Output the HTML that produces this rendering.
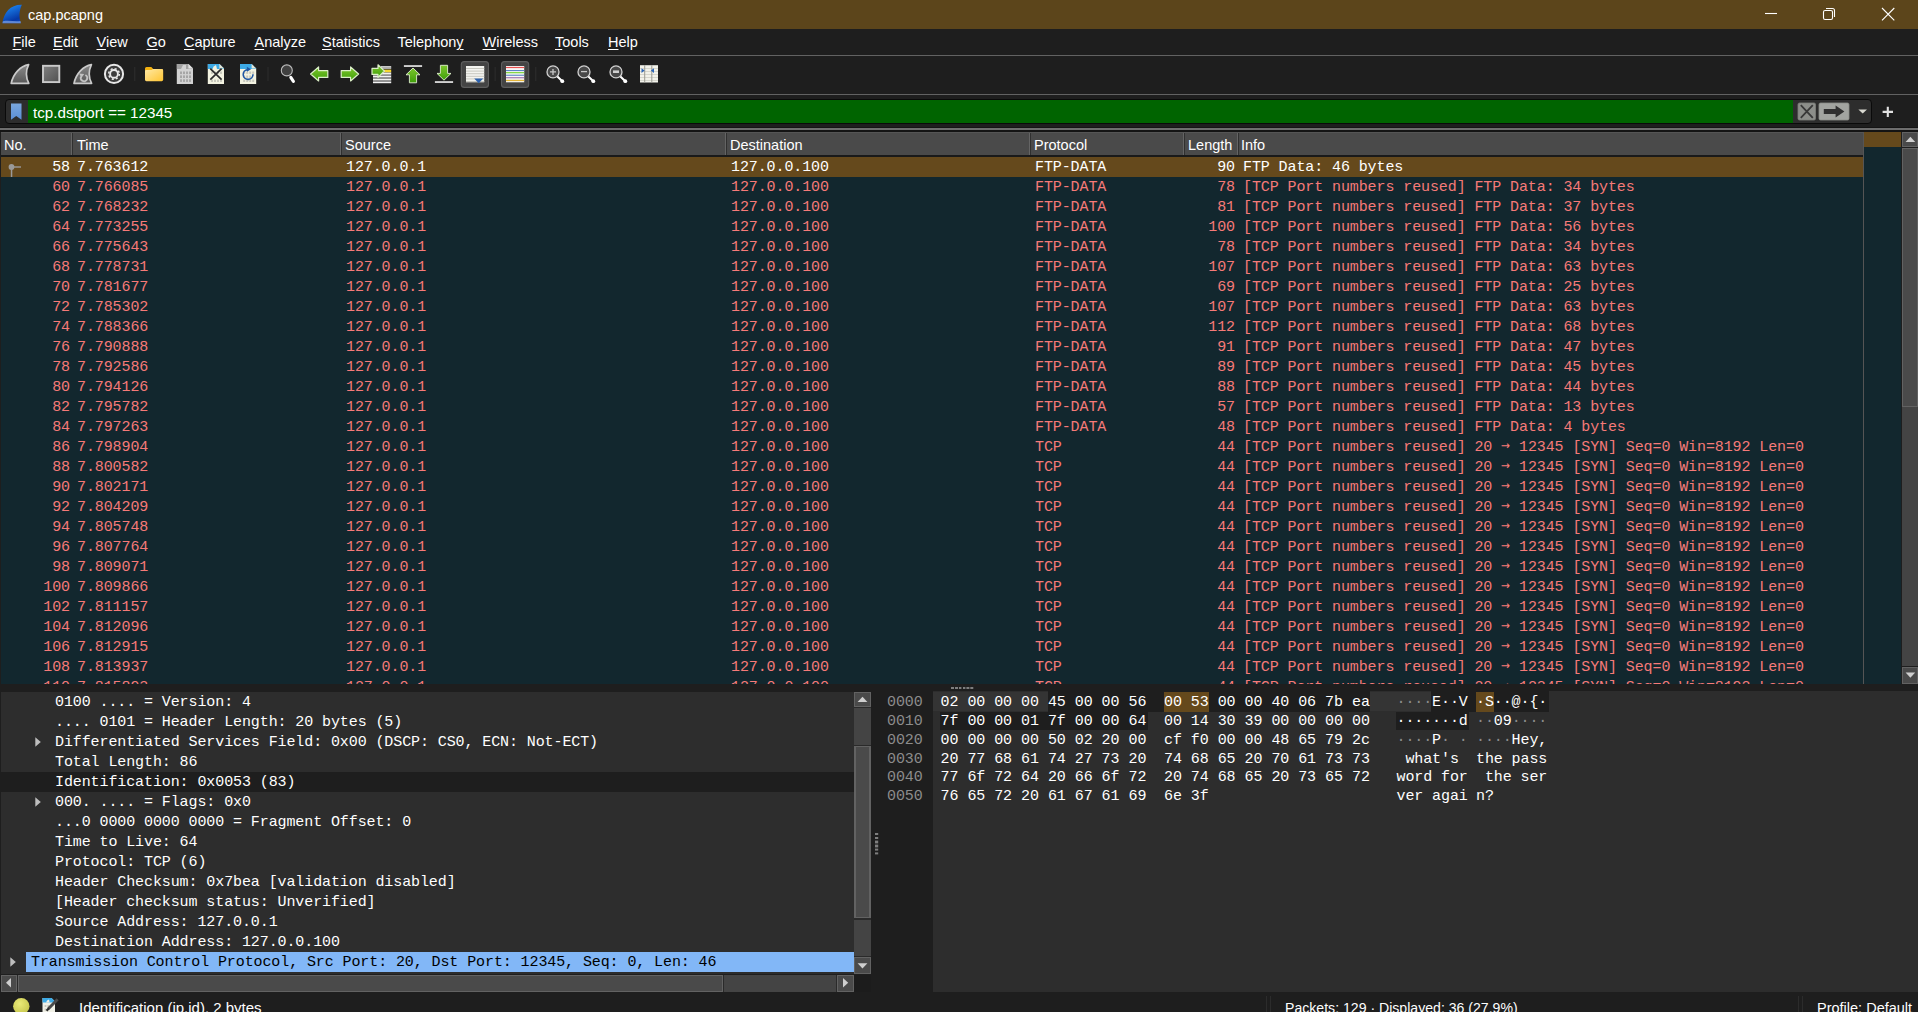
<!DOCTYPE html>
<html lang="en">
<head>
<meta charset="utf-8">
<title>cap.pcapng</title>
<style>
*{box-sizing:border-box;margin:0;padding:0}
html,body{width:1918px;height:1012px;overflow:hidden;background:#1e1e1e}
body{position:relative;font-family:"Liberation Sans",sans-serif;color:#fff}
.abs{position:absolute}
#title{position:absolute;left:0;top:0;width:1918px;height:29px;background:#5c451b}
#title .tt{position:absolute;left:28px;top:6px;font-size:14.5px;line-height:18px;color:#fff}
#menu{position:absolute;left:0;top:29px;width:1918px;height:26px;background:#1e1e1e}
.mi{position:absolute;top:4px;font-size:14.5px;line-height:18px;color:#fff;white-space:pre}
.mi u{text-decoration:underline;text-underline-offset:1.5px;text-decoration-thickness:1px}
.hl{position:absolute;left:0;width:1918px;height:1px}
#filter{position:absolute;left:5px;top:99px;width:1867px;height:25px;background:#2d2d2d;border:1px solid #0a0a0a;border-radius:4px}
#fgreen{position:absolute;left:28px;top:100px;width:1765px;height:23px;background:#006400}
#ftext{position:absolute;left:33px;top:103px;font-size:15.2px;line-height:20px;color:#fff;white-space:pre}
/* packet list */
#plist{position:absolute;left:1px;top:132px;width:1862px;height:552px;background:#12272e;overflow:hidden}
#phead{position:absolute;left:0;top:0;width:1862px;height:23px;background:#4a4a4a;border-top:1px solid #555}
.hc{position:absolute;top:3px;font-size:14.5px;line-height:18px;color:#fff}
.hs{position:absolute;top:0px;width:1px;height:22px;background:#646464}
.hs2{position:absolute;top:0px;width:1px;height:24px;background:#303030}
.r{position:absolute;left:1px;width:1862px;height:20px;color:#f67a78;font-family:"Liberation Mono",monospace;font-size:15px;letter-spacing:-0.1px;line-height:20px;white-space:pre}
.r.sel{background:#65491c;color:#fff}
.c{position:absolute;top:1px}
.ar{font-family:"DejaVu Sans Mono","Liberation Mono",monospace;font-size:14.8px;letter-spacing:0;line-height:0;position:relative;top:-1px}
.no{right:1793px}
.tm{left:76px}
.sr{left:345px}
.ds{left:730px}
.pr{left:1034px}
.ln{right:628px}
.inf{left:1242px}
/* tree */
#tree{position:absolute;left:1px;top:692px;width:853px;height:283px;background:#2d2d2d}
.tsel{position:absolute;left:1px;width:853px;height:20px;background:#1e1e1e}
.tblue{position:absolute;left:26px;width:828px;height:20px;background:#82b7f7}
.tl{position:absolute;font-family:"Liberation Mono",monospace;font-size:15px;letter-spacing:-0.1px;line-height:20px;white-space:pre;color:#fff;margin-top:1px}
.tl.blk{color:#000}
.exp{position:absolute}
/* hex */
#hexoff{position:absolute;left:880px;top:691px;width:53px;height:301px;background:#1e1e1e}
#hexbg{position:absolute;left:933px;top:691px;width:985px;height:301px;background:#2d2d2d}
.hx{position:absolute;font-family:"Liberation Mono",monospace;font-size:15px;letter-spacing:-0.1px;line-height:19px;white-space:pre;color:#fff;margin-top:1px}
.hx.off{color:#8c8c8c}
.dm{color:#8c8c8c}
.hbg{position:absolute}
/* scrollbars */
.sb{position:absolute;background:#444}
.sbb{position:absolute;background:#4a4a4a;border:1px solid #626262}
#status{position:absolute;left:0;top:992px;width:1918px;height:20px;background:#1e1e1e}
.st{position:absolute;top:999px;font-size:14.5px;line-height:18px;color:#fff;white-space:pre}
</style>
</head>
<body>
<div id="title"><span class="tt">cap.pcapng</span></div>
<div id="menu">
<span class="mi" style="left:12.5px"><u>F</u>ile</span>
<span class="mi" style="left:53.0px"><u>E</u>dit</span>
<span class="mi" style="left:96.5px"><u>V</u>iew</span>
<span class="mi" style="left:146.5px"><u>G</u>o</span>
<span class="mi" style="left:184.0px"><u>C</u>apture</span>
<span class="mi" style="left:254.5px"><u>A</u>nalyze</span>
<span class="mi" style="left:322.0px"><u>S</u>tatistics</span>
<span class="mi" style="left:397.5px">Telephon<u>y</u></span>
<span class="mi" style="left:482.5px"><u>W</u>ireless</span>
<span class="mi" style="left:555.0px"><u>T</u>ools</span>
<span class="mi" style="left:608.0px"><u>H</u>elp</span>
</div>
<div class="hl" style="top:55px;background:#626262"></div>
<div class="hl" style="top:94px;background:#626262"></div>
<div id="filter"></div>
<div id="fgreen"></div>
<div id="ftext">tcp.dstport == 12345</div>

<svg class="abs" style="left:0;top:0" width="1918" height="130" viewBox="0 0 1918 130">
<defs>
<linearGradient id="gfin" x1="0" y1="0" x2="0" y2="1"><stop offset="0" stop-color="#8a8a8a"/><stop offset="1" stop-color="#585858"/></linearGradient>
<linearGradient id="gsq" x1="0" y1="0" x2="1" y2="1"><stop offset="0" stop-color="#808080"/><stop offset="1" stop-color="#505050"/></linearGradient>
<linearGradient id="gfold" x1="0" y1="0" x2="1" y2="1"><stop offset="0" stop-color="#ffe9a6"/><stop offset="1" stop-color="#ffc532"/></linearGradient>
<linearGradient id="ggrn" x1="0" y1="0" x2="0" y2="1"><stop offset="0" stop-color="#7cc62c"/><stop offset="1" stop-color="#3f9e0a"/></linearGradient>
<linearGradient id="gblue" x1="0.3" y1="0" x2="0.75" y2="1"><stop offset="0" stop-color="#1f8cf6"/><stop offset="0.8" stop-color="#0638a6"/><stop offset="1" stop-color="#0a44b8"/></linearGradient>
<linearGradient id="gbm" x1="0" y1="0" x2="0" y2="1"><stop offset="0" stop-color="#7aa7de"/><stop offset="1" stop-color="#5b8fd6"/></linearGradient>
</defs>
<!-- title icon -->
<path d="M21.9 4.7 C10.5 4.4 3.8 12.5 2.4 23.2 L20.9 23.2 C18.9 17.5 19 10.5 21.9 4.7 Z" fill="url(#gblue)"/>
<path d="M2.9 21.2 C9 20 15 21.8 20.5 20.9 L20.9 23.2 L2.4 23.2 Z" fill="#a8c4f4" opacity="0.55"/>
<!-- window controls -->
<path d="M1765 13.5 H1777" stroke="#fff" stroke-width="1.1" fill="none"/>
<rect x="1823.5" y="10.5" width="9" height="9" rx="1.6" fill="none" stroke="#fff" stroke-width="1.1"/>
<path d="M1826 8.5 H1832.5 Q1834.5 8.5 1834.5 10.5 V17" fill="none" stroke="#fff" stroke-width="1.1"/>
<path d="M1882 8 L1894.3 20.3 M1894.3 8 L1882 20.3" stroke="#fff" stroke-width="1.1" fill="none"/>
<!-- toolbar -->
<path d="M28.6 64.6 C20.5 66 13.2 73.5 11.2 83.3 L28.8 83.3 C25.8 77.5 25.8 70.5 28.6 64.6 Z" fill="url(#gfin)" stroke="#cacaca" stroke-width="1.7" stroke-linejoin="round"/>
<rect x="43" y="65.8" width="16.3" height="16.3" fill="url(#gsq)" stroke="#cacaca" stroke-width="1.9"/>
<path transform="translate(62.8 0)" d="M28.6 64.6 C20.5 66 13.2 73.5 11.2 83.3 L28.8 83.3 C25.8 77.5 25.8 70.5 28.6 64.6 Z" fill="url(#gfin)" stroke="#cacaca" stroke-width="1.7" stroke-linejoin="round"/>
<path d="M85.4 75 A3.3 3.3 0 1 1 81 76.6" fill="none" stroke="#c2c2c2" stroke-width="1.9"/>
<path d="M79.2 73.6 L84.2 74 L81.4 78 Z" fill="#c2c2c2"/>
<circle cx="114" cy="73.9" r="9.1" fill="#3c3c3c" stroke="#e8e8e8" stroke-width="2"/>
<circle cx="114" cy="73.9" r="3.9" fill="none" stroke="#e8e8e8" stroke-width="1.9"/>
<circle cx="114" cy="73.9" r="5.3" fill="none" stroke="#e8e8e8" stroke-width="1.5" stroke-dasharray="2.08 2.08"/>
<g fill="#292929"><rect x="134" y="67" width="1.4" height="14"/><rect x="267.3" y="67" width="1.4" height="14"/><rect x="494.5" y="67" width="1.4" height="14"/><rect x="535" y="67" width="1.4" height="14"/></g>
<!-- folder -->
<path d="M145 80 V68.4 Q145 66.9 146.5 66.9 H151.3 L153.2 68.9 H161.6 Q163.1 68.9 163.1 70.4 V80 Z" fill="#f2b010"/>
<path d="M145 71 Q145 69.9 146.2 69.9 H151.6 L153 68.9 H161.8 Q163.1 68.9 163.1 70.2 V79.8 Q163.1 81.2 161.7 81.2 H146.4 Q145 81.2 145 79.8 Z" fill="url(#gfold)"/>
<!-- gray doc -->
<path d="M176.8 64 H188.4 L193 68.6 V84 H176.8 Z" fill="#d2d2d2"/>
<path d="M176.8 64 H188.4 L193 68.6 V69 H176.8 Z" fill="#a2a2a2"/>
<path d="M181 69 L183 65 H186 L186 69Z" fill="#d2d2d2"/>
<path d="M188.4 64 L193 68.6 H188.4 Z" fill="#e2e2e2"/>
<g fill="#a6a6a6"><rect x="180" y="71.5" width="2" height="2.6"/><rect x="183" y="71.5" width="2" height="2.6"/><rect x="186" y="71.5" width="2" height="2.6"/><rect x="189" y="71.5" width="2" height="2.6"/>
<rect x="180" y="75.4" width="2" height="2.6"/><rect x="183" y="75.4" width="2" height="2.6"/><rect x="186" y="75.4" width="2" height="2.6"/><rect x="189" y="75.4" width="2" height="2.6"/>
<rect x="180" y="79.3" width="2" height="2.6"/><rect x="183" y="79.3" width="2" height="2.6"/><rect x="186" y="79.3" width="2" height="2.6"/><rect x="189" y="79.3" width="2" height="2.6"/></g>
<!-- X doc -->
<path d="M207.8 64 H219.4 L224 68.6 V84 H207.8 Z" fill="#f3f3e1"/>
<path d="M207.8 64 H219.4 L224 68.6 V69 H207.8 Z" fill="#3daae6"/>
<path d="M212.5 69 Q213 66 216 65 L217 69Z" fill="#f3f3e1"/>
<path d="M219.4 64 L224 68.6 H219.4 Z" fill="#e6e6d6"/>
<g fill="#c9c9bd"><rect x="211" y="71.5" width="2" height="2.4"/><rect x="214" y="71.5" width="2" height="2.4"/><rect x="217" y="71.5" width="2" height="2.4"/><rect x="220" y="71.5" width="2" height="2.4"/>
<rect x="211" y="79.6" width="2" height="2.4"/><rect x="214" y="79.6" width="2" height="2.4"/><rect x="217" y="79.6" width="2" height="2.4"/><rect x="220" y="79.6" width="2" height="2.4"/></g>
<path d="M210.3 68.6 L221.6 79.6 M221.6 68.6 L210.3 79.6" stroke="#2b2b2b" stroke-width="1.7" fill="none"/>
<!-- reload doc -->
<path d="M240 64 H251.6 L256.2 68.6 V84 H240 Z" fill="#f3f3e1"/>
<path d="M240 64 H251.6 L256.2 68.6 V69 H240 Z" fill="#3daae6"/>
<path d="M251.6 64 L256.2 68.6 H251.6 Z" fill="#e6e6d6"/>
<g fill="#c9c9bd"><rect x="243.2" y="71.5" width="2" height="2.4"/><rect x="246.2" y="71.5" width="2" height="2.4"/><rect x="249.2" y="71.5" width="2" height="2.4"/><rect x="252.2" y="71.5" width="2" height="2.4"/>
<rect x="243.2" y="75.5" width="2" height="2.4"/><rect x="246.2" y="75.5" width="2" height="2.4"/><rect x="249.2" y="75.5" width="2" height="2.4"/>
<rect x="243.2" y="79.6" width="2" height="2.4"/><rect x="246.2" y="79.6" width="2" height="2.4"/><rect x="249.2" y="79.6" width="2" height="2.4"/><rect x="252.2" y="79.6" width="2" height="2.4"/></g>
<path d="M253 74.3 A4.9 4.9 0 1 1 247.6 69.6" fill="none" stroke="#1f57a4" stroke-width="1.6"/>
<path d="M246.8 66.8 L251 69.2 L247 71.8 Z" fill="#1f57a4"/>
<!-- find -->
<circle cx="286.8" cy="70.4" r="5.5" fill="#404040" stroke="#bcbcbc" stroke-width="1.1"/>
<path d="M290.8 77.4 L293.4 81.4" stroke="#fff" stroke-width="3.1" stroke-linecap="round"/>
<!-- arrows -->
<path d="M310.6 74 L318.6 67 V70.6 H327.8 V77.4 H318.6 V81 Z" fill="url(#ggrn)" stroke="#dcefc8" stroke-width="1.2" stroke-linejoin="round"/>
<path d="M358.6 74 L350.6 67 V70.6 H341.2 V77.4 H350.6 V81 Z" fill="url(#ggrn)" stroke="#dcefc8" stroke-width="1.2" stroke-linejoin="round"/>
<!-- goto -->
<g fill="#f2f2f2"><rect x="381" y="66.2" width="10.2" height="1.5"/><rect x="373" y="72.4" width="18.2" height="1.6"/><rect x="373" y="75.6" width="18.2" height="1.6"/><rect x="373" y="78.6" width="18.2" height="1.6"/><rect x="373" y="81.6" width="18.2" height="1.6"/></g>
<g fill="#a8a8a8"><rect x="381" y="67.7" width="10.2" height="1.3"/><rect x="373" y="74" width="18.2" height="1.6"/><rect x="373" y="77.2" width="18.2" height="1.4"/><rect x="373" y="80.2" width="18.2" height="1.4"/></g>
<rect x="384" y="69.6" width="7.2" height="2.6" fill="#f5d631"/>
<path d="M384.4 71 L378 64.8 V68.4 H372 V74.4 H378 V77.4 Z" fill="url(#ggrn)" stroke="#dcefc8" stroke-width="1.2" stroke-linejoin="round"/>
<!-- first / last -->
<rect x="403.9" y="65.1" width="18.2" height="1.9" fill="#d0d0d0"/>
<path d="M413 68 L420 74.8 H416.6 V82.8 H409.4 V74.8 H406 Z" fill="url(#ggrn)" stroke="#e2f2d0" stroke-width="0.9" stroke-linejoin="round"/>
<rect x="434.9" y="81.1" width="18.2" height="1.9" fill="#d0d0d0"/>
<path d="M444 80.2 L451 73.4 H447.6 V65.3 H440.4 V73.4 H437 Z" fill="url(#ggrn)" stroke="#e2f2d0" stroke-width="0.9" stroke-linejoin="round"/>
<!-- toggle buttons -->
<rect x="461.3" y="61.6" width="27.2" height="25.8" rx="3" fill="#444" stroke="#5e5e5e" stroke-width="1.1"/>
<rect x="466" y="66" width="18.2" height="16.3" fill="#f4f4f0"/>
<g fill="#c8c8c0"><rect x="466" y="68" width="18.2" height="1"/><rect x="466" y="70.6" width="18.2" height="1"/><rect x="466" y="73.2" width="18.2" height="1"/><rect x="466" y="75.8" width="18.2" height="1"/><rect x="466" y="78.4" width="18.2" height="1"/><rect x="466" y="81" width="18.2" height="1"/></g>
<path d="M474.2 78.6 H483.2 L478.7 83.2 Z" fill="#2d62ae"/>
<rect x="501.5" y="61.6" width="27.2" height="25.8" rx="3" fill="#444" stroke="#5e5e5e" stroke-width="1.1"/>
<rect x="506" y="66" width="18.2" height="16.3" fill="#f8f8f8"/>
<rect x="506" y="66.9" width="18.2" height="1.2" fill="#ea5252"/><rect x="506" y="70" width="18.2" height="1.1" fill="#5b86c4"/><rect x="506" y="72" width="18.2" height="1.3" fill="#86d848"/><rect x="506" y="74.7" width="18.2" height="1.1" fill="#5b86c4"/><rect x="506" y="77.2" width="18.2" height="1.1" fill="#9a6aa8"/><rect x="506" y="79.8" width="18.2" height="1.3" fill="#e4b53a"/>
<!-- zoom icons -->
<g><path d="M557.4 76.4 L562.6 81.4" stroke="#fff" stroke-width="2.1" stroke-linecap="round"/><circle cx="562.3" cy="81.2" r="1.9" fill="#fff"/><circle cx="553" cy="71.9" r="6" fill="#484848" stroke="#d2d2d2" stroke-width="1.3"/></g>
<g transform="translate(31 0)"><path d="M557.4 76.4 L562.6 81.4" stroke="#fff" stroke-width="2.1" stroke-linecap="round"/><circle cx="562.3" cy="81.2" r="1.9" fill="#fff"/><circle cx="553" cy="71.9" r="6" fill="#484848" stroke="#d2d2d2" stroke-width="1.3"/></g><g transform="translate(63 0)"><path d="M557.4 76.4 L562.6 81.4" stroke="#fff" stroke-width="2.1" stroke-linecap="round"/><circle cx="562.3" cy="81.2" r="1.9" fill="#fff"/><circle cx="553" cy="71.9" r="6" fill="#484848" stroke="#d2d2d2" stroke-width="1.3"/></g>
<path d="M550 71.9 H556 M553 68.9 V74.9" stroke="#c8c8c8" stroke-width="1.3"/>
<path d="M581 71.6 H587" stroke="#c8c8c8" stroke-width="1.3"/>
<rect x="613" y="70.4" width="6" height="2.6" fill="#d0d0d0"/>
<!-- resize cols -->
<rect x="640" y="65.2" width="18" height="17.3" fill="#f2f2ea"/>
<g fill="#cfcfc6"><rect x="640" y="68" width="18" height="0.8"/><rect x="640" y="71" width="18" height="0.8"/><rect x="640" y="74" width="18" height="0.8"/><rect x="640" y="77" width="18" height="0.8"/><rect x="640" y="80" width="18" height="0.8"/></g>
<rect x="644.2" y="65.2" width="1" height="17.3" fill="#9a9a92"/><rect x="651.3" y="65.2" width="1" height="17.3" fill="#9a9a92"/>
<path d="M641.5 68.2 L644.6 70.6 L641.5 73 Z" fill="#2c66b8"/><path d="M654 68.2 L650.9 70.6 L654 73 Z" fill="#2c66b8"/>
<!-- filter bar -->
<path d="M11 103.4 H21.5 V119.8 L16.25 116 L11 119.8 Z" fill="url(#gbm)"/>
<rect x="1798" y="103" width="17.5" height="17" rx="1.5" fill="#8c8e8a" stroke="#7c7e7a" stroke-width="0.8"/>
<path d="M1800.8 105.2 L1812.8 117.8 M1812.8 105.2 L1800.8 117.8" stroke="#383838" stroke-width="1.8"/>
<rect x="1819" y="103" width="30" height="17" rx="1.5" fill="#a2a4a0" stroke="#8c8e88" stroke-width="0.8"/>
<path d="M1823.8 108.9 H1835.6 V105.6 L1844.4 111.5 L1835.6 117.4 V114.1 H1823.8 Z" fill="#303030"/>
<path d="M1858.4 109.4 H1867 L1862.7 113.4 Z" fill="#d8d8d0"/>
<path d="M1882.6 111.9 H1893 M1887.8 106.8 V117" stroke="#e2e2e2" stroke-width="2.1"/>
</svg>
<div class="hl" style="top:127px;background:#141414"></div>
<div class="hl" style="top:128px;height:2px;background:#6e6e6e"></div>
<div class="hl" style="top:130px;height:2px;background:#141414"></div>

<div id="plist">
<div id="phead">
<span class="hs" style="left:70px"></span><span class="hs2" style="left:71px"></span><span class="hs" style="left:339px"></span><span class="hs2" style="left:340px"></span><span class="hs" style="left:724px"></span><span class="hs2" style="left:725px"></span><span class="hs" style="left:1028px"></span><span class="hs2" style="left:1029px"></span><span class="hs" style="left:1182px"></span><span class="hs2" style="left:1183px"></span><span class="hs" style="left:1236px"></span><span class="hs2" style="left:1237px"></span>
<span class="hc" style="left:3px">No.</span>
<span class="hc" style="left:76px">Time</span>
<span class="hc" style="left:344px">Source</span>
<span class="hc" style="left:729px">Destination</span>
<span class="hc" style="left:1033px">Protocol</span>
<span class="hc" style="left:1187px">Length</span>
<span class="hc" style="left:1240px">Info</span>
</div>
</div>
<div class="abs" style="left:0;top:155px;width:1863px;height:2px;background:#1a1a1a"></div>
<div class="r sel" style="top:157px"><span class="c no">58</span><span class="c tm">7.763612</span><span class="c sr">127.0.0.1</span><span class="c ds">127.0.0.100</span><span class="c pr">FTP-DATA</span><span class="c ln">90</span><span class="c inf">FTP Data: 46 bytes</span></div>
<div class="r" style="top:177px"><span class="c no">60</span><span class="c tm">7.766085</span><span class="c sr">127.0.0.1</span><span class="c ds">127.0.0.100</span><span class="c pr">FTP-DATA</span><span class="c ln">78</span><span class="c inf">[TCP Port numbers reused] FTP Data: 34 bytes</span></div>
<div class="r" style="top:197px"><span class="c no">62</span><span class="c tm">7.768232</span><span class="c sr">127.0.0.1</span><span class="c ds">127.0.0.100</span><span class="c pr">FTP-DATA</span><span class="c ln">81</span><span class="c inf">[TCP Port numbers reused] FTP Data: 37 bytes</span></div>
<div class="r" style="top:217px"><span class="c no">64</span><span class="c tm">7.773255</span><span class="c sr">127.0.0.1</span><span class="c ds">127.0.0.100</span><span class="c pr">FTP-DATA</span><span class="c ln">100</span><span class="c inf">[TCP Port numbers reused] FTP Data: 56 bytes</span></div>
<div class="r" style="top:237px"><span class="c no">66</span><span class="c tm">7.775643</span><span class="c sr">127.0.0.1</span><span class="c ds">127.0.0.100</span><span class="c pr">FTP-DATA</span><span class="c ln">78</span><span class="c inf">[TCP Port numbers reused] FTP Data: 34 bytes</span></div>
<div class="r" style="top:257px"><span class="c no">68</span><span class="c tm">7.778731</span><span class="c sr">127.0.0.1</span><span class="c ds">127.0.0.100</span><span class="c pr">FTP-DATA</span><span class="c ln">107</span><span class="c inf">[TCP Port numbers reused] FTP Data: 63 bytes</span></div>
<div class="r" style="top:277px"><span class="c no">70</span><span class="c tm">7.781677</span><span class="c sr">127.0.0.1</span><span class="c ds">127.0.0.100</span><span class="c pr">FTP-DATA</span><span class="c ln">69</span><span class="c inf">[TCP Port numbers reused] FTP Data: 25 bytes</span></div>
<div class="r" style="top:297px"><span class="c no">72</span><span class="c tm">7.785302</span><span class="c sr">127.0.0.1</span><span class="c ds">127.0.0.100</span><span class="c pr">FTP-DATA</span><span class="c ln">107</span><span class="c inf">[TCP Port numbers reused] FTP Data: 63 bytes</span></div>
<div class="r" style="top:317px"><span class="c no">74</span><span class="c tm">7.788366</span><span class="c sr">127.0.0.1</span><span class="c ds">127.0.0.100</span><span class="c pr">FTP-DATA</span><span class="c ln">112</span><span class="c inf">[TCP Port numbers reused] FTP Data: 68 bytes</span></div>
<div class="r" style="top:337px"><span class="c no">76</span><span class="c tm">7.790888</span><span class="c sr">127.0.0.1</span><span class="c ds">127.0.0.100</span><span class="c pr">FTP-DATA</span><span class="c ln">91</span><span class="c inf">[TCP Port numbers reused] FTP Data: 47 bytes</span></div>
<div class="r" style="top:357px"><span class="c no">78</span><span class="c tm">7.792586</span><span class="c sr">127.0.0.1</span><span class="c ds">127.0.0.100</span><span class="c pr">FTP-DATA</span><span class="c ln">89</span><span class="c inf">[TCP Port numbers reused] FTP Data: 45 bytes</span></div>
<div class="r" style="top:377px"><span class="c no">80</span><span class="c tm">7.794126</span><span class="c sr">127.0.0.1</span><span class="c ds">127.0.0.100</span><span class="c pr">FTP-DATA</span><span class="c ln">88</span><span class="c inf">[TCP Port numbers reused] FTP Data: 44 bytes</span></div>
<div class="r" style="top:397px"><span class="c no">82</span><span class="c tm">7.795782</span><span class="c sr">127.0.0.1</span><span class="c ds">127.0.0.100</span><span class="c pr">FTP-DATA</span><span class="c ln">57</span><span class="c inf">[TCP Port numbers reused] FTP Data: 13 bytes</span></div>
<div class="r" style="top:417px"><span class="c no">84</span><span class="c tm">7.797263</span><span class="c sr">127.0.0.1</span><span class="c ds">127.0.0.100</span><span class="c pr">FTP-DATA</span><span class="c ln">48</span><span class="c inf">[TCP Port numbers reused] FTP Data: 4 bytes</span></div>
<div class="r" style="top:437px"><span class="c no">86</span><span class="c tm">7.798904</span><span class="c sr">127.0.0.1</span><span class="c ds">127.0.0.100</span><span class="c pr">TCP</span><span class="c ln">44</span><span class="c inf">[TCP Port numbers reused] 20 <span class="ar">→</span> 12345 [SYN] Seq=0 Win=8192 Len=0</span></div>
<div class="r" style="top:457px"><span class="c no">88</span><span class="c tm">7.800582</span><span class="c sr">127.0.0.1</span><span class="c ds">127.0.0.100</span><span class="c pr">TCP</span><span class="c ln">44</span><span class="c inf">[TCP Port numbers reused] 20 <span class="ar">→</span> 12345 [SYN] Seq=0 Win=8192 Len=0</span></div>
<div class="r" style="top:477px"><span class="c no">90</span><span class="c tm">7.802171</span><span class="c sr">127.0.0.1</span><span class="c ds">127.0.0.100</span><span class="c pr">TCP</span><span class="c ln">44</span><span class="c inf">[TCP Port numbers reused] 20 <span class="ar">→</span> 12345 [SYN] Seq=0 Win=8192 Len=0</span></div>
<div class="r" style="top:497px"><span class="c no">92</span><span class="c tm">7.804209</span><span class="c sr">127.0.0.1</span><span class="c ds">127.0.0.100</span><span class="c pr">TCP</span><span class="c ln">44</span><span class="c inf">[TCP Port numbers reused] 20 <span class="ar">→</span> 12345 [SYN] Seq=0 Win=8192 Len=0</span></div>
<div class="r" style="top:517px"><span class="c no">94</span><span class="c tm">7.805748</span><span class="c sr">127.0.0.1</span><span class="c ds">127.0.0.100</span><span class="c pr">TCP</span><span class="c ln">44</span><span class="c inf">[TCP Port numbers reused] 20 <span class="ar">→</span> 12345 [SYN] Seq=0 Win=8192 Len=0</span></div>
<div class="r" style="top:537px"><span class="c no">96</span><span class="c tm">7.807764</span><span class="c sr">127.0.0.1</span><span class="c ds">127.0.0.100</span><span class="c pr">TCP</span><span class="c ln">44</span><span class="c inf">[TCP Port numbers reused] 20 <span class="ar">→</span> 12345 [SYN] Seq=0 Win=8192 Len=0</span></div>
<div class="r" style="top:557px"><span class="c no">98</span><span class="c tm">7.809071</span><span class="c sr">127.0.0.1</span><span class="c ds">127.0.0.100</span><span class="c pr">TCP</span><span class="c ln">44</span><span class="c inf">[TCP Port numbers reused] 20 <span class="ar">→</span> 12345 [SYN] Seq=0 Win=8192 Len=0</span></div>
<div class="r" style="top:577px"><span class="c no">100</span><span class="c tm">7.809866</span><span class="c sr">127.0.0.1</span><span class="c ds">127.0.0.100</span><span class="c pr">TCP</span><span class="c ln">44</span><span class="c inf">[TCP Port numbers reused] 20 <span class="ar">→</span> 12345 [SYN] Seq=0 Win=8192 Len=0</span></div>
<div class="r" style="top:597px"><span class="c no">102</span><span class="c tm">7.811157</span><span class="c sr">127.0.0.1</span><span class="c ds">127.0.0.100</span><span class="c pr">TCP</span><span class="c ln">44</span><span class="c inf">[TCP Port numbers reused] 20 <span class="ar">→</span> 12345 [SYN] Seq=0 Win=8192 Len=0</span></div>
<div class="r" style="top:617px"><span class="c no">104</span><span class="c tm">7.812096</span><span class="c sr">127.0.0.1</span><span class="c ds">127.0.0.100</span><span class="c pr">TCP</span><span class="c ln">44</span><span class="c inf">[TCP Port numbers reused] 20 <span class="ar">→</span> 12345 [SYN] Seq=0 Win=8192 Len=0</span></div>
<div class="r" style="top:637px"><span class="c no">106</span><span class="c tm">7.812915</span><span class="c sr">127.0.0.1</span><span class="c ds">127.0.0.100</span><span class="c pr">TCP</span><span class="c ln">44</span><span class="c inf">[TCP Port numbers reused] 20 <span class="ar">→</span> 12345 [SYN] Seq=0 Win=8192 Len=0</span></div>
<div class="r" style="top:657px"><span class="c no">108</span><span class="c tm">7.813937</span><span class="c sr">127.0.0.1</span><span class="c ds">127.0.0.100</span><span class="c pr">TCP</span><span class="c ln">44</span><span class="c inf">[TCP Port numbers reused] 20 <span class="ar">→</span> 12345 [SYN] Seq=0 Win=8192 Len=0</span></div>
<div class="r" style="top:677px"><span class="c no">110</span><span class="c tm">7.815893</span><span class="c sr">127.0.0.1</span><span class="c ds">127.0.0.100</span><span class="c pr">TCP</span><span class="c ln">44</span><span class="c inf">[TCP Port numbers reused] 20 <span class="ar">→</span> 12345 [SYN] Seq=0 Win=8192 Len=0</span></div>
<div class="abs" style="left:0;top:684px;width:1918px;height:8px;background:#1e1e1e"></div>
<div class="abs" style="left:0;top:132px;width:1px;height:552px;background:#1e1e1e"></div>
<div class="abs" style="left:1863px;top:132px;width:1px;height:552px;background:#555"></div>
<div class="abs" style="left:1864px;top:132px;width:37px;height:552px;background:#12272e"></div>
<div class="abs" style="left:1864px;top:132px;width:37px;height:15px;background:#65491c"></div>
<div class="abs" style="left:1901px;top:132px;width:17px;height:552px;background:#1e1e1e"></div>
<div class="sb" style="left:1902px;top:148px;width:16px;height:518px"></div>
<div class="sbb" style="left:1902px;top:132px;width:16px;height:15px"></div>
<div class="sbb" style="left:1902px;top:148px;width:16px;height:259px"></div>
<div class="sbb" style="left:1902px;top:667px;width:16px;height:17px"></div>

<div id="tree"></div>

<div class="tl" style="left:55px;top:692px">0100 .... = Version: 4</div>

<div class="tl" style="left:55px;top:712px">.... 0101 = Header Length: 20 bytes (5)</div>

<svg class="exp" style="left:35px;top:737px" width="8" height="10" viewBox="0 0 8 10"><path d="M0.3 0.2 L5.8 5 L0.3 9.8 Z" fill="#bebebe"/></svg>
<div class="tl" style="left:55px;top:732px">Differentiated Services Field: 0x00 (DSCP: CS0, ECN: Not-ECT)</div>

<div class="tl" style="left:55px;top:752px">Total Length: 86</div>
<div class="tsel" style="top:772px"></div>
<div class="tl" style="left:55px;top:772px">Identification: 0x0053 (83)</div>

<svg class="exp" style="left:35px;top:797px" width="8" height="10" viewBox="0 0 8 10"><path d="M0.3 0.2 L5.8 5 L0.3 9.8 Z" fill="#bebebe"/></svg>
<div class="tl" style="left:55px;top:792px">000. .... = Flags: 0x0</div>

<div class="tl" style="left:55px;top:812px">...0 0000 0000 0000 = Fragment Offset: 0</div>

<div class="tl" style="left:55px;top:832px">Time to Live: 64</div>

<div class="tl" style="left:55px;top:852px">Protocol: TCP (6)</div>

<div class="tl" style="left:55px;top:872px">Header Checksum: 0x7bea [validation disabled]</div>

<div class="tl" style="left:55px;top:892px">[Header checksum status: Unverified]</div>

<div class="tl" style="left:55px;top:912px">Source Address: 127.0.0.1</div>

<div class="tl" style="left:55px;top:932px">Destination Address: 127.0.0.100</div>
<div class="tblue" style="top:952px"></div>
<svg class="exp" style="left:10px;top:957px" width="8" height="10" viewBox="0 0 8 10"><path d="M0.3 0.2 L5.8 5 L0.3 9.8 Z" fill="#bebebe"/></svg>
<div class="tl blk" style="left:31px;top:952px">Transmission Control Protocol, Src Port: 20, Dst Port: 12345, Seq: 0, Len: 46</div>
<div id="hexoff"></div>
<div id="hexbg"></div>
<div class="hbg" style="left:933px;top:692px;width:115px;height:19px;background:#343434"></div>
<div class="hbg" style="left:1370px;top:692px;width:61px;height:19px;background:#343434"></div>
<div class="hbg" style="left:1048px;top:691px;width:322px;height:20.5px;background:#1e1e1e"></div>
<div class="hbg" style="left:1431px;top:691px;width:118px;height:20.5px;background:#1e1e1e"></div>
<div class="hbg" style="left:940px;top:711.5px;width:208px;height:18.5px;background:#1e1e1e"></div>
<div class="hbg" style="left:1396px;top:711.5px;width:73px;height:18.5px;background:#1e1e1e"></div>
<div class="hbg" style="left:1164px;top:692px;width:45px;height:19.5px;background:#65491c"></div>
<div class="hbg" style="left:1476px;top:692px;width:18px;height:19.5px;background:#65491c"></div>
<div class="hx off" style="left:887px;top:692px">0000</div>
<div class="hx" style="left:940.5px;top:692px">02</div>
<div class="hx" style="left:967.4px;top:692px">00</div>
<div class="hx" style="left:994.2px;top:692px">00</div>
<div class="hx" style="left:1021.0px;top:692px">00</div>
<div class="hx" style="left:1047.9px;top:692px">45</div>
<div class="hx" style="left:1074.8px;top:692px">00</div>
<div class="hx" style="left:1101.6px;top:692px">00</div>
<div class="hx" style="left:1128.5px;top:692px">56</div>
<div class="hx" style="left:1164.0px;top:692px">00</div>
<div class="hx" style="left:1190.8px;top:692px">53</div>
<div class="hx" style="left:1217.7px;top:692px">00</div>
<div class="hx" style="left:1244.5px;top:692px">00</div>
<div class="hx" style="left:1271.4px;top:692px">40</div>
<div class="hx" style="left:1298.2px;top:692px">06</div>
<div class="hx" style="left:1325.1px;top:692px">7b</div>
<div class="hx" style="left:1352.0px;top:692px">ea</div>
<div class="hx asc" style="left:1396.5px;top:692px"><span class="dm">····</span>E··V</div>
<div class="hx asc" style="left:1476px;top:692px">·S··@·{·</div>
<div class="hx off" style="left:887px;top:711px">0010</div>
<div class="hx" style="left:940.5px;top:711px">7f</div>
<div class="hx" style="left:967.4px;top:711px">00</div>
<div class="hx" style="left:994.2px;top:711px">00</div>
<div class="hx" style="left:1021.0px;top:711px">01</div>
<div class="hx" style="left:1047.9px;top:711px">7f</div>
<div class="hx" style="left:1074.8px;top:711px">00</div>
<div class="hx" style="left:1101.6px;top:711px">00</div>
<div class="hx" style="left:1128.5px;top:711px">64</div>
<div class="hx" style="left:1164.0px;top:711px">00</div>
<div class="hx" style="left:1190.8px;top:711px">14</div>
<div class="hx" style="left:1217.7px;top:711px">30</div>
<div class="hx" style="left:1244.5px;top:711px">39</div>
<div class="hx" style="left:1271.4px;top:711px">00</div>
<div class="hx" style="left:1298.2px;top:711px">00</div>
<div class="hx" style="left:1325.1px;top:711px">00</div>
<div class="hx" style="left:1352.0px;top:711px">00</div>
<div class="hx asc" style="left:1396.5px;top:711px">·······d</div>
<div class="hx asc" style="left:1476px;top:711px"><span class="dm">··</span>09<span class="dm">····</span></div>
<div class="hx off" style="left:887px;top:730px">0020</div>
<div class="hx" style="left:940.5px;top:730px">00</div>
<div class="hx" style="left:967.4px;top:730px">00</div>
<div class="hx" style="left:994.2px;top:730px">00</div>
<div class="hx" style="left:1021.0px;top:730px">00</div>
<div class="hx" style="left:1047.9px;top:730px">50</div>
<div class="hx" style="left:1074.8px;top:730px">02</div>
<div class="hx" style="left:1101.6px;top:730px">20</div>
<div class="hx" style="left:1128.5px;top:730px">00</div>
<div class="hx" style="left:1164.0px;top:730px">cf</div>
<div class="hx" style="left:1190.8px;top:730px">f0</div>
<div class="hx" style="left:1217.7px;top:730px">00</div>
<div class="hx" style="left:1244.5px;top:730px">00</div>
<div class="hx" style="left:1271.4px;top:730px">48</div>
<div class="hx" style="left:1298.2px;top:730px">65</div>
<div class="hx" style="left:1325.1px;top:730px">79</div>
<div class="hx" style="left:1352.0px;top:730px">2c</div>
<div class="hx asc" style="left:1396.5px;top:730px"><span class="dm">····</span>P<span class="dm">·</span> <span class="dm">·</span></div>
<div class="hx asc" style="left:1476px;top:730px"><span class="dm">····</span>Hey,</div>
<div class="hx off" style="left:887px;top:749px">0030</div>
<div class="hx" style="left:940.5px;top:749px">20</div>
<div class="hx" style="left:967.4px;top:749px">77</div>
<div class="hx" style="left:994.2px;top:749px">68</div>
<div class="hx" style="left:1021.0px;top:749px">61</div>
<div class="hx" style="left:1047.9px;top:749px">74</div>
<div class="hx" style="left:1074.8px;top:749px">27</div>
<div class="hx" style="left:1101.6px;top:749px">73</div>
<div class="hx" style="left:1128.5px;top:749px">20</div>
<div class="hx" style="left:1164.0px;top:749px">74</div>
<div class="hx" style="left:1190.8px;top:749px">68</div>
<div class="hx" style="left:1217.7px;top:749px">65</div>
<div class="hx" style="left:1244.5px;top:749px">20</div>
<div class="hx" style="left:1271.4px;top:749px">70</div>
<div class="hx" style="left:1298.2px;top:749px">61</div>
<div class="hx" style="left:1325.1px;top:749px">73</div>
<div class="hx" style="left:1352.0px;top:749px">73</div>
<div class="hx asc" style="left:1396.5px;top:749px"> what's </div>
<div class="hx asc" style="left:1476px;top:749px">the pass</div>
<div class="hx off" style="left:887px;top:767px">0040</div>
<div class="hx" style="left:940.5px;top:767px">77</div>
<div class="hx" style="left:967.4px;top:767px">6f</div>
<div class="hx" style="left:994.2px;top:767px">72</div>
<div class="hx" style="left:1021.0px;top:767px">64</div>
<div class="hx" style="left:1047.9px;top:767px">20</div>
<div class="hx" style="left:1074.8px;top:767px">66</div>
<div class="hx" style="left:1101.6px;top:767px">6f</div>
<div class="hx" style="left:1128.5px;top:767px">72</div>
<div class="hx" style="left:1164.0px;top:767px">20</div>
<div class="hx" style="left:1190.8px;top:767px">74</div>
<div class="hx" style="left:1217.7px;top:767px">68</div>
<div class="hx" style="left:1244.5px;top:767px">65</div>
<div class="hx" style="left:1271.4px;top:767px">20</div>
<div class="hx" style="left:1298.2px;top:767px">73</div>
<div class="hx" style="left:1325.1px;top:767px">65</div>
<div class="hx" style="left:1352.0px;top:767px">72</div>
<div class="hx asc" style="left:1396.5px;top:767px">word for</div>
<div class="hx asc" style="left:1476px;top:767px"> the ser</div>
<div class="hx off" style="left:887px;top:786px">0050</div>
<div class="hx" style="left:940.5px;top:786px">76</div>
<div class="hx" style="left:967.4px;top:786px">65</div>
<div class="hx" style="left:994.2px;top:786px">72</div>
<div class="hx" style="left:1021.0px;top:786px">20</div>
<div class="hx" style="left:1047.9px;top:786px">61</div>
<div class="hx" style="left:1074.8px;top:786px">67</div>
<div class="hx" style="left:1101.6px;top:786px">61</div>
<div class="hx" style="left:1128.5px;top:786px">69</div>
<div class="hx" style="left:1164.0px;top:786px">6e</div>
<div class="hx" style="left:1190.8px;top:786px">3f</div>
<div class="hx asc" style="left:1396.5px;top:786px">ver agai</div>
<div class="hx asc" style="left:1476px;top:786px">n?</div>
<div id="status"></div>
<!-- tree scrollbars -->
<div class="sb" style="left:854px;top:692px;width:17px;height:282px"></div>
<div class="sbb" style="left:854px;top:692px;width:17px;height:15px"></div>
<div class="abs" style="left:854px;top:707px;width:17px;height:1px;background:#2a2a2a"></div>
<div class="abs" style="left:854px;top:745px;width:17px;height:1px;background:#2a2a2a"></div>
<div class="sbb" style="left:854px;top:746px;width:17px;height:172px;border-left-width:2px;border-right-width:2px"></div>
<div class="abs" style="left:854px;top:918px;width:17px;height:2px;background:#2a2a2a"></div>
<div class="abs" style="left:854px;top:956px;width:17px;height:1px;background:#2a2a2a"></div>
<div class="sbb" style="left:854px;top:957px;width:17px;height:17px"></div>
<div class="abs" style="left:0;top:974px;width:871px;height:1px;background:#1e1e1e"></div>
<div class="sb" style="left:1px;top:975px;width:853px;height:17px"></div>
<div class="sbb" style="left:1px;top:975px;width:16px;height:17px"></div>
<div class="abs" style="left:17px;top:975px;width:1px;height:17px;background:#2a2a2a"></div>
<div class="sbb" style="left:18px;top:975px;width:705px;height:17px"></div>
<div class="abs" style="left:723px;top:975px;width:1px;height:17px;background:#2a2a2a"></div>
<div class="abs" style="left:836px;top:975px;width:1px;height:17px;background:#2a2a2a"></div>
<div class="sbb" style="left:837px;top:975px;width:17px;height:17px"></div>
<div class="abs" style="left:854px;top:975px;width:17px;height:17px;background:#1c1c1c"></div>
<svg class="abs" style="left:0;top:130px" width="1918" height="882" viewBox="0 130 1918 882">
<g fill="#cfcfcf">
<path d="M1905.6 142 L1910.4 136.8 L1915.2 142 Z"/>
<path d="M1905.6 672.6 L1915.2 672.6 L1910.4 677.8 Z"/>
<path d="M857.6 702 L862.5 696.8 L867.4 702 Z"/>
<path d="M857.6 963.2 L867.4 963.2 L862.5 968.4 Z"/>
<path d="M11 978 L11 987.4 L6 982.7 Z"/>
<path d="M843 978 L843 987.4 L848.2 982.7 Z"/>
</g>
<!-- splitter handles -->
<g fill="#7e7e7e">
<rect x="951" y="687" width="3" height="2"/><rect x="955" y="687" width="3" height="2"/><rect x="959" y="687" width="2.4" height="2"/><rect x="963" y="687" width="2.4" height="2"/><rect x="966.4" y="687" width="3" height="2"/><rect x="970.3" y="687" width="3" height="2"/>
<rect x="875" y="833" width="3.2" height="2"/><rect x="875" y="837" width="3.2" height="2"/><rect x="875" y="840.6" width="3.2" height="2.8"/><rect x="875" y="844.6" width="3.2" height="2.8"/><rect x="875" y="848.6" width="3.2" height="2"/><rect x="875" y="852.4" width="3.2" height="2"/>
</g>
<!-- first-row related packet marker -->
<g fill="#9a9a9a"><circle cx="11.5" cy="167" r="2.9"/><rect x="11" y="166.3" width="10" height="1.4"/><rect x="10.8" y="167" width="1.5" height="10"/></g>
<!-- status icons -->
<defs><radialGradient id="gy" cx="0.4" cy="0.35" r="0.7"><stop offset="0" stop-color="#eaea78"/><stop offset="1" stop-color="#c6c64c"/></radialGradient></defs>
<circle cx="21.3" cy="1006.2" r="8.2" fill="url(#gy)"/>
<path d="M42.5 998 H51.5 L55 1001.5 V1013 H42.5 Z" fill="#f0f0e6"/>
<path d="M42.5 998 H51.5 L55 1001.5 V1002.4 H42.5 Z" fill="#3daae6"/>
<path d="M46 1002.4 Q46.6 1000 49 999.4 L49.6 1002.4Z" fill="#f0f0e6"/>
<g fill="#c8c8bc"><rect x="44.6" y="1005" width="1.8" height="2"/><rect x="47.4" y="1005" width="1.8" height="2"/><rect x="44.6" y="1008.6" width="1.8" height="2"/></g>
<path d="M57.6 999.2 L48.4 1008.8" stroke="#4a4a4a" stroke-width="3"/>
<path d="M48.9 1008.3 L46.6 1010.7" stroke="#2a2a2a" stroke-width="2.2"/>
<!-- status separators -->
<g fill="#2c2c2c"><rect x="1266" y="996" width="1" height="16"/><rect x="1270" y="996" width="1" height="16"/><rect x="1798" y="996" width="1" height="16"/><rect x="1802" y="996" width="1" height="16"/></g>
</svg>

<span class="st" style="left:79px;font-size:15px">Identification (ip.id), 2 bytes</span>
<span class="st" style="left:1285px;font-size:14.1px">Packets: 129 · Displayed: 36 (27.9%)</span>
<span class="st" style="left:1817px">Profile: Default</span>
</body>
</html>
